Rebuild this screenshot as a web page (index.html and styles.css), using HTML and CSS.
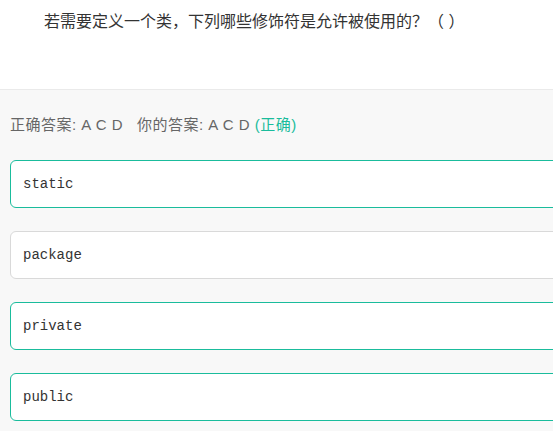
FILE: index.html
```html
<!DOCTYPE html>
<html lang="zh">
<head>
<meta charset="utf-8">
<link rel="stylesheet" href="styles.css">
</head>
<body>
<div class="question">
  <p class="title">若需要定义一个类，下列哪些修饰符是允许被使用的？（ ）</p>
</div>
<div class="answer-area">
  <div class="result">正确答案: A C D&nbsp;&nbsp;&nbsp;你的答案: A C D <span class="ok">(正确)</span></div>
  <div class="options">
    <div class="option correct">static</div>
    <div class="option">package</div>
    <div class="option correct">private</div>
    <div class="option correct">public</div>
  </div>
</div>
</body>
</html>
```
FILE: styles.css
```css
html, body {
  margin: 0;
  padding: 0;
}
body {
  font-family: "Liberation Sans", "Noto Sans CJK SC", sans-serif;
  background: #f8f8f8;
  color: #333;
  overflow: hidden;
}
.question {
  background: #fff;
  height: 90px;
  border-bottom: 1px solid #eaeaea;
  box-sizing: border-box;
}
.title {
  margin: 0;
  padding: 10px 0 0 44px;
  font-size: 16px;
  line-height: 24px;
  color: #333;
}
.answer-area {
  padding: 24px 0 0 10px;
}
.result {
  font-size: 15px;
  line-height: 22px;
  color: #666;
  letter-spacing: 0.5px;
}
.ok {
  color: #1abc9c;
}
.options {
  margin-top: 24px;
  display: flex;
  flex-direction: column;
  gap: 23px;
}
.option {
  width: 560px;
  height: 48px;
  box-sizing: border-box;
  background: #fff;
  border: 1px solid #d9d9d9;
  border-radius: 6px;
  padding-left: 12px;
  display: flex;
  align-items: center;
  font-family: "Liberation Mono", "Courier New", monospace;
  font-size: 14px;
  color: #333;
}
.option.correct {
  border-color: #1abc9c;
}
```
